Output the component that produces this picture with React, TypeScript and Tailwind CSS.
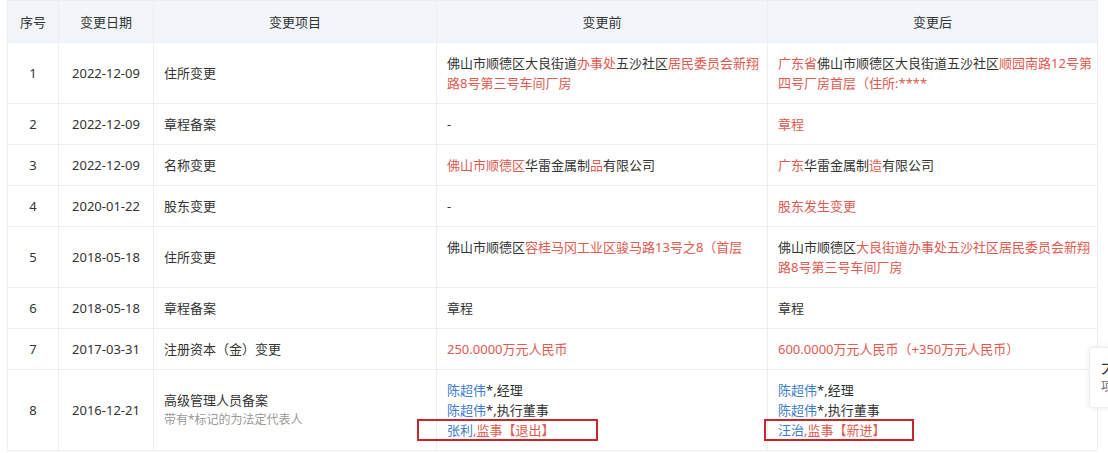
import React from "react";

type Seg = { t: string; c?: "red" | "blue" | "gray" };

type Row = {
  no: number;
  date: string;
  item: React.ReactNode;
  before: React.ReactNode;
  after: React.ReactNode;
};

const color = {
  red: "text-[#e05a50]",
  blue: "text-[#3d7dcc]",
  gray: "text-[#999999]",
};

function Rich({ segs }: { segs: Seg[] }) {
  return (
    <>
      {segs.map((s, i) => (
        <span key={i} className={s.c ? color[s.c] : ""}>
          {s.t}
        </span>
      ))}
    </>
  );
}

// 标注框：截图上画的红色框
function Marked({
  children,
  left,
  width,
}: {
  children: React.ReactNode;
  left: number;
  width: number;
}) {
  return (
    <div className="relative">
      {children}
      <span
        className="absolute top-[-1px] bottom-[-1px] border-2 border-[#c8262d] pointer-events-none"
        style={{ left: -left, width }}
      />
    </div>
  );
}

const rows: Row[] = [
  {
    no: 1,
    date: "2022-12-09",
    item: "住所变更",
    before: (
      <Rich
        segs={[
          { t: "佛山市顺德区大良街道" },
          { t: "办事处", c: "red" },
          { t: "五沙社区" },
          { t: "居民委员会新翔路8号第三号车间厂房", c: "red" },
        ]}
      />
    ),
    after: (
      <Rich
        segs={[
          { t: "广东省", c: "red" },
          { t: "佛山市顺德区大良街道五沙社区" },
          { t: "顺园南路12号第四号厂房首层（住所:****", c: "red" },
        ]}
      />
    ),
  },
  {
    no: 2,
    date: "2022-12-09",
    item: "章程备案",
    before: "-",
    after: <Rich segs={[{ t: "章程", c: "red" }]} />,
  },
  {
    no: 3,
    date: "2022-12-09",
    item: "名称变更",
    before: (
      <Rich
        segs={[
          { t: "佛山市顺德区", c: "red" },
          { t: "华雷金属制" },
          { t: "品", c: "red" },
          { t: "有限公司" },
        ]}
      />
    ),
    after: (
      <Rich
        segs={[
          { t: "广东", c: "red" },
          { t: "华雷金属制" },
          { t: "造", c: "red" },
          { t: "有限公司" },
        ]}
      />
    ),
  },
  {
    no: 4,
    date: "2020-01-22",
    item: "股东变更",
    before: "-",
    after: <Rich segs={[{ t: "股东发生变更", c: "red" }]} />,
  },
  {
    no: 5,
    date: "2018-05-18",
    item: "住所变更",
    before: (
      <Rich
        segs={[
          { t: "佛山市顺德区" },
          { t: "容桂马冈工业区骏马路13号之8（首层", c: "red" },
        ]}
      />
    ),
    after: (
      <Rich
        segs={[
          { t: "佛山市顺德区" },
          { t: "大良街道办事处五沙社区居民委员会新翔路8号第三号车间厂房", c: "red" },
        ]}
      />
    ),
  },
  {
    no: 6,
    date: "2018-05-18",
    item: "章程备案",
    before: "章程",
    after: "章程",
  },
  {
    no: 7,
    date: "2017-03-31",
    item: "注册资本（金）变更",
    before: <Rich segs={[{ t: "250.0000万元人民币", c: "red" }]} />,
    after: (
      <Rich segs={[{ t: "600.0000万元人民币（+350万元人民币）", c: "red" }]} />
    ),
  },
  {
    no: 8,
    date: "2016-12-21",
    item: (
      <>
        <div>高级管理人员备案</div>
        <div className="text-[12px] text-[#999999]">带有*标记的为法定代表人</div>
      </>
    ),
    before: (
      <>
        <div>
          <Rich segs={[{ t: "陈超伟", c: "blue" }, { t: "*,经理" }]} />
        </div>
        <div>
          <Rich segs={[{ t: "陈超伟", c: "blue" }, { t: "*,执行董事" }]} />
        </div>
        <Marked left={30} width={181}>
          <Rich
            segs={[
              { t: "张利", c: "blue" },
              { t: ",监事【退出】", c: "red" },
            ]}
          />
        </Marked>
      </>
    ),
    after: (
      <>
        <div>
          <Rich segs={[{ t: "陈超伟", c: "blue" }, { t: "*,经理" }]} />
        </div>
        <div>
          <Rich segs={[{ t: "陈超伟", c: "blue" }, { t: "*,执行董事" }]} />
        </div>
        <Marked left={14} width={150}>
          <Rich
            segs={[
              { t: "汪治", c: "blue" },
              { t: ",监事【新进】", c: "red" },
            ]}
          />
        </Marked>
      </>
    ),
  },
];

const cell = "border border-[#ebeef2] py-[10px] leading-[20px]";

export default function App() {
  return (
    <div
      className="relative w-[1108px] h-[453px] overflow-hidden bg-white text-[13px] text-[#333333]"
      style={{ fontFamily: '"Noto Sans", "Noto Sans CJK SC", sans-serif' }}
    >
      <table className="ml-[7px] w-[1090px] table-fixed border-collapse">
        <colgroup>
          <col className="w-[51px]" />
          <col className="w-[95px]" />
          <col className="w-[283px]" />
          <col className="w-[331px]" />
          <col className="w-[330px]" />
        </colgroup>
        <thead>
          <tr className="bg-[#f2f6fa]">
            {["序号", "变更日期", "变更项目", "变更前", "变更后"].map((h) => (
              <th
                key={h}
                className="h-[42px] border border-[#ebeef2] px-0 text-center font-normal leading-[20px] text-[#333333]"
              >
                {h}
              </th>
            ))}
          </tr>
        </thead>
        <tbody>
          {rows.map((r) => (
            <tr key={r.no}>
              <td className={`${cell} px-0 text-center align-middle`}>{r.no}</td>
              <td className={`${cell} px-0 text-center align-middle`}>{r.date}</td>
              <td className={`${cell} px-[10px] align-middle`}>{r.item}</td>
              <td className={`${cell} pl-[10px] pr-[2px] align-top`}>{r.before}</td>
              <td className={`${cell} pl-[10px] pr-[2px] align-top`}>{r.after}</td>
            </tr>
          ))}
        </tbody>
      </table>

      {/* 右侧悬浮工具栏，被窗口边缘截断 */}
      <div className="absolute left-[1089px] top-[347px] h-[61px] w-[48px] rounded-[3px] border border-[#eeeeee] bg-white px-[11px] pt-[8px] shadow-[0_0_6px_rgba(0,0,0,0.08)]">
        <div className="text-[17px] leading-[22px] text-[#333333]">大</div>
        <div className="text-[12px] leading-[18px] text-[#666666]">项目</div>
      </div>
    </div>
  );
}
